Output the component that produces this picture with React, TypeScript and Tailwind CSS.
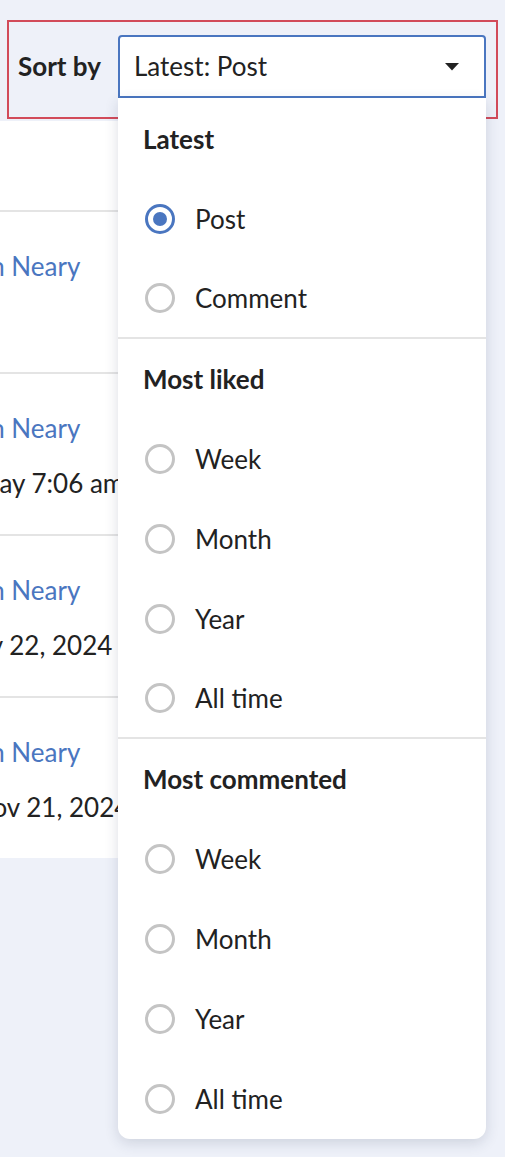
import { useState } from "react";

type Group = { title: string; items: string[] };

const groups: Group[] = [
  { title: "Latest", items: ["Post", "Comment"] },
  { title: "Most liked", items: ["Week", "Month", "Year", "All time"] },
  { title: "Most commented", items: ["Week", "Month", "Year", "All time"] },
];

const posts = [
  { author: "Ron Neary", date: "", shift: "-ml-[40px]", dateShift: "" },
  { author: "Ron Neary", date: "Today 7:06 am", shift: "-ml-[40px]", dateShift: "-ml-[42px]" },
  { author: "Ron Neary", date: "Nov 22, 2024", shift: "-ml-[40px]", dateShift: "-ml-[44px]" },
  { author: "Ron Neary", date: "Nov 21, 2024", shift: "-ml-[40px]", dateShift: "-ml-[27px]" },
];

const Radio = ({ checked }: { checked: boolean }) => {
  if (checked) {
    return (
      <span className="flex h-[30px] w-[30px] items-center justify-center rounded-full border-[3px] border-[#4a76c0]">
        <span className="h-[14px] w-[14px] rounded-full bg-[#4a76c0]" />
      </span>
    );
  }
  return <span className="h-[30px] w-[30px] rounded-full border-[3px] border-[#c4c4c4]" />;
};

const App = () => {
  const [selected, setSelected] = useState("Latest:Post");

  return (
    <div className="relative h-[1157px] w-[505px] overflow-hidden bg-[#eef1f9] font-[Lato,sans-serif] text-[26px] text-[#222]">
      <div className="px-[7px] pt-[20px]">
        <div className="flex items-start border-2 border-[#d24b5a] pb-[19px] pl-[9px] pr-[10px] pt-[13px]">
          <div className="flex h-[63px] w-[100px] items-center font-bold">Sort by</div>
          <div className="relative w-[368px]">
            <div className="flex h-[63px] items-center justify-between rounded-t-[4px] border-2 border-[#4a76c0] bg-white pl-[14px] pr-[25px]">
              <span>Latest: Post</span>
              <svg width="14" height="8" viewBox="0 0 14 8">
                <path d="M0 0 L14 0 L7 7.5 Z" fill="#222" />
              </svg>
            </div>

            {/* dropdown menu */}
            <div className="absolute left-0 top-full z-10 w-full rounded-b-[12px] bg-white pt-[1px] shadow-[0_4px_14px_rgba(40,50,80,0.16)]">
              {groups.map((g, gi) => (
                <div key={g.title}>
                  <div className="flex h-[80px] items-center pl-[25px] font-bold">{g.title}</div>
                  {g.items.map((item, ii) => {
                    const key = g.title + ":" + item;
                    const last = ii === g.items.length - 1 && gi < groups.length - 1;
                    return (
                      <div
                        key={key}
                        onClick={() => setSelected(key)}
                        className={
                          last
                            ? "flex h-[80px] cursor-pointer items-center gap-[20px] border-b-2 border-[#e4e4e4] pl-[27px]"
                            : "flex h-[80px] cursor-pointer items-center gap-[20px] pl-[27px]"
                        }
                      >
                        <Radio checked={selected === key} />
                        <span>{item}</span>
                      </div>
                    );
                  })}
                </div>
              ))}
            </div>
          </div>
        </div>
      </div>

      {/* post list under the menu */}
      <div className="mt-[2px] w-[470px] overflow-hidden bg-white">
        <div className="h-[89px]" />
        {posts.map((p, i) => (
          <div key={i} className="h-[162px] border-t-2 border-[#e4e4e4] pt-[38px] whitespace-nowrap">
            <div className={p.shift + " leading-[33px] text-[#4a76c0]"}>{p.author}</div>
            {p.date && <div className={p.dateShift + " mt-[22px] leading-[33px]"}>{p.date}</div>}
          </div>
        ))}
      </div>
    </div>
  );
};

export default App;
